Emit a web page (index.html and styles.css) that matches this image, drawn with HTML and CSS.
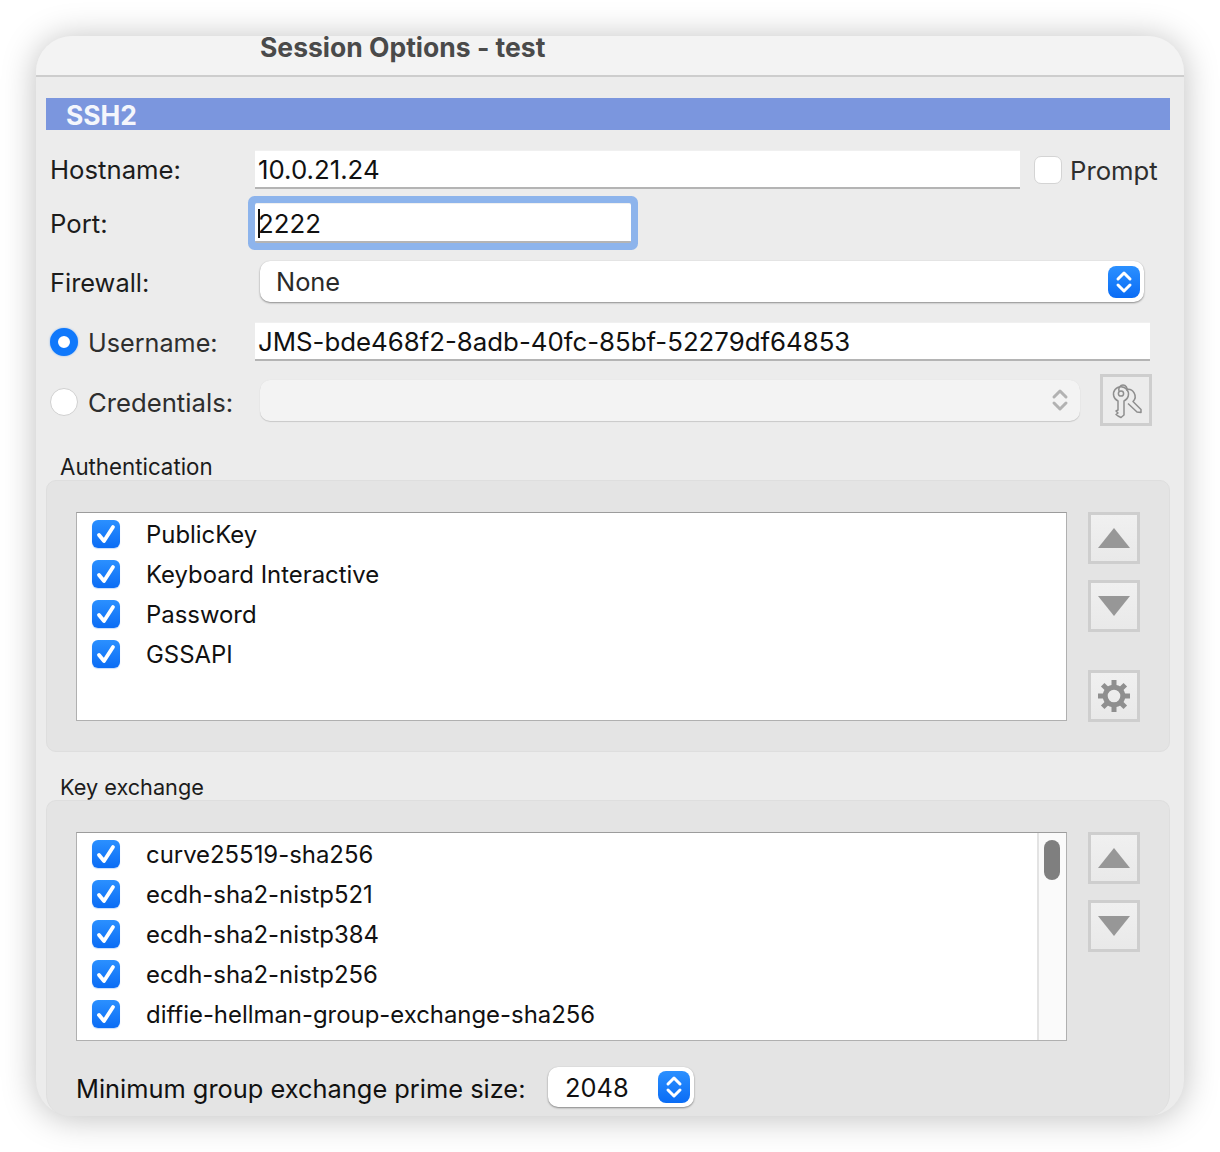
FILE: index.html
```html
<!DOCTYPE html>
<html lang="en">
<head>
  <meta charset="UTF-8">
  <meta name="viewport" content="width=device-width, initial-scale=1.0">
  <title>Session Options - test</title>
  <link rel="stylesheet" href="styles.css">
</head>
<body>
  <svg class="sprites" aria-hidden="true">
    <symbol id="check" viewBox="0 0 28 28">
      <polyline points="7,15 12,21 21,7" fill="none" stroke="#fff" stroke-width="3.8" stroke-linecap="round" stroke-linejoin="round"/>
    </symbol>
    <symbol id="updown" viewBox="0 0 32 32">
      <polyline points="10,13 16,7 22,13" fill="none" stroke="currentColor" stroke-width="3" stroke-linecap="round" stroke-linejoin="round"/>
      <polyline points="10,19 16,25 22,19" fill="none" stroke="currentColor" stroke-width="3" stroke-linecap="round" stroke-linejoin="round"/>
    </symbol>
    <symbol id="tri-up" viewBox="0 0 32 20">
      <polygon points="16,0 32,20 0,20" fill="#979797"/>
    </symbol>
    <symbol id="tri-down" viewBox="0 0 32 20">
      <polygon points="0,0 32,0 16,20" fill="#979797"/>
    </symbol>
    <symbol id="gear" viewBox="0 0 32 32">
      <circle cx="16" cy="16" r="8.8" fill="none" stroke="#8f8f8f" stroke-width="5"/>
      <g stroke="#8f8f8f" stroke-width="5">
        <line x1="16" y1="0" x2="16" y2="7"/>
        <line x1="16" y1="25" x2="16" y2="32"/>
        <line x1="0" y1="16" x2="7" y2="16"/>
        <line x1="25" y1="16" x2="32" y2="16"/>
        <line x1="4.7" y1="4.7" x2="9.6" y2="9.6"/>
        <line x1="22.4" y1="22.4" x2="27.3" y2="27.3"/>
        <line x1="4.7" y1="27.3" x2="9.6" y2="22.4"/>
        <line x1="22.4" y1="9.6" x2="27.3" y2="4.7"/>
      </g>
    </symbol>
  </svg>

  <div class="window">
    <div class="titlebar">Session Options - test</div>

    <div class="content">
      <div class="section-bar">SSH2</div>

      <div class="row row-host">
        <label class="label label-host">Hostname:</label>
        <div class="field field-host">10.0.21.24</div>
        <span class="checkbox-empty"></span>
        <span class="prompt">Prompt</span>
      </div>

      <div class="row row-port">
        <label class="label label-port">Port:</label>
        <div class="field field-port"><span class="caret"></span>2222</div>
      </div>

      <div class="row row-firewall">
        <label class="label label-host label-firewall">Firewall:</label>
        <div class="select select-firewall">
          <span>None</span>
          <span class="select-arrow"><svg><use href="#updown"/></svg></span>
        </div>
      </div>

      <div class="row row-user">
        <span class="radio radio-on"></span>
        <label class="label label-radio label-user">Username:</label>
        <div class="field field-user">JMS-bde468f2-8adb-40fc-85bf-52279df64853</div>
      </div>

      <div class="row row-cred">
        <span class="radio"></span>
        <label class="label label-radio">Credentials:</label>
        <div class="select select-cred">
          <span class="select-arrow-off"><svg><use href="#updown"/></svg></span>
        </div>
        <div class="tool-btn key-btn">
          <svg viewBox="3 3 46 46">
            <g fill="none" stroke="#8e8e8e" stroke-width="1.5" stroke-linejoin="round">
              <path d="M19 17 A4.2 4.6 0 1 1 27 17"/>
              <path d="M26 15.5 A7.2 7.2 0 0 1 33 27.5 L41 35.5 L41 38.5 L37 38 L28 29.5"/>
              <path d="M18 27 L18 36 L16 37 L18 39 L16 40.5 L18 42 L21 43.5 L24 41 L24 27 A7.5 7.5 0 1 0 18 27 Z"/>
              <circle cx="21" cy="19.5" r="2.6"/>
            </g>
          </svg>
        </div>
      </div>

      <div class="group-title">Authentication</div>
      <div class="group">
        <div class="group-main">
          <div class="list">
            <div class="list-items">
              <div class="list-row"><span class="checkbox"><svg><use href="#check"/></svg></span><span>PublicKey</span></div>
              <div class="list-row"><span class="checkbox"><svg><use href="#check"/></svg></span><span>Keyboard Interactive</span></div>
              <div class="list-row"><span class="checkbox"><svg><use href="#check"/></svg></span><span>Password</span></div>
              <div class="list-row"><span class="checkbox"><svg><use href="#check"/></svg></span><span>GSSAPI</span></div>
            </div>
          </div>
          <div class="tool-col">
            <div class="tool-btn"><svg class="tri"><use href="#tri-up"/></svg></div>
            <div class="tool-btn"><svg class="tri"><use href="#tri-down"/></svg></div>
            <div class="tool-btn tool-gear"><svg class="gear"><use href="#gear"/></svg></div>
          </div>
        </div>
      </div>

      <div class="group-title group-title-kex">Key exchange</div>
      <div class="group group-kex">
        <div class="group-main">
          <div class="list">
            <div class="list-items">
              <div class="list-row"><span class="checkbox"><svg><use href="#check"/></svg></span><span>curve25519-sha256</span></div>
              <div class="list-row"><span class="checkbox"><svg><use href="#check"/></svg></span><span>ecdh-sha2-nistp521</span></div>
              <div class="list-row"><span class="checkbox"><svg><use href="#check"/></svg></span><span>ecdh-sha2-nistp384</span></div>
              <div class="list-row"><span class="checkbox"><svg><use href="#check"/></svg></span><span>ecdh-sha2-nistp256</span></div>
              <div class="list-row"><span class="checkbox"><svg><use href="#check"/></svg></span><span>diffie-hellman-group-exchange-sha256</span></div>
              <div class="list-row"><span class="checkbox"><svg><use href="#check"/></svg></span></div>
            </div>
            <div class="scroll-track"><div class="scroll-thumb"></div></div>
          </div>
          <div class="tool-col">
            <div class="tool-btn"><svg class="tri"><use href="#tri-up"/></svg></div>
            <div class="tool-btn"><svg class="tri"><use href="#tri-down"/></svg></div>
          </div>
        </div>
        <div class="prime-row">
          <span class="prime-label">Minimum group exchange prime size:</span>
          <div class="select select-prime">
            <span>2048</span>
            <span class="select-arrow"><svg><use href="#updown"/></svg></span>
          </div>
        </div>
      </div>
    </div>
  </div>
</body>
</html>
```

FILE: styles.css
```css
:root {
  --text: #1c1c1c;
  --label: #2e2e2e;
  --window-bg: #ececec;
  --group-bg: #e4e4e4;
  --blue-top: #2b90ff;
  --blue-bottom: #0a6cf5;
}

* {
  box-sizing: border-box;
}

html, body {
  margin: 0;
  height: 1152px;
  overflow: hidden;
  background: #fff;
}

body {
  padding: 36px;
  font-family: "Inter", "Liberation Sans", sans-serif;
  font-size: 25.7px;
  color: var(--text);
}

.sprites {
  position: absolute;
  width: 0;
  height: 0;
}

.window {
  width: 1148px;
  height: 1080px;
  background: var(--window-bg);
  border-radius: 36px;
  box-shadow: 0 2px 34px rgba(0, 0, 0, 0.26);
}

.titlebar {
  height: 41px;
  padding: 0 0 0 224px;
  background: #f3f3f3;
  border-bottom: 2px solid #cdcdcd;
  border-radius: 36px 36px 0 0;
  font-size: 26.5px;
  font-weight: 700;
  line-height: 22px;
  color: #4a4a4a;
}

.content {
  padding: 21px 14px 0 10px;
}

.section-bar {
  height: 32px;
  padding-left: 20px;
  background: #7b96de;
  color: #f4f6fc;
  font-size: 26.4px;
  font-weight: 700;
  line-height: 34px;
}

.row {
  display: flex;
  align-items: center;
  padding-left: 4px;
}

.label {
  width: 205px;
  flex: none;
  margin-top: 2px;
  color: var(--text);
}

.label-host {
  margin-top: 0;
}

.label-port {
  margin-top: 0;
}

.label-firewall {
  margin-top: 2px;
  font-size: 25.4px;
}

.label-radio {
  width: 167px;
  margin-left: 10px;
  color: var(--label);
}

.label-user {
  font-size: 25.2px;
}

.field {
  height: 39px;
  padding-left: 3px;
  background: #fff;
  border-top: 1px solid #f0f0f0;
  border-bottom: 2px solid #b4b4b4;
  line-height: 37px;
  font-size: 25.8px;
  color: #111;
}

.row-host {
  margin-top: 20px;
}

.field-host {
  width: 765px;
}

.checkbox-empty {
  width: 28px;
  height: 28px;
  margin-left: 14px;
  background: #fff;
  border: 1px solid #d4d4d4;
  border-radius: 7px;
}

.prompt {
  margin: 2px 0 0 8px;
  color: var(--label);
}

.row-port {
  margin-top: 14px;
}

.field-port {
  position: relative;
  width: 376px;
  height: 40px;
  line-height: 39px;
  box-shadow: 0 0 0 7px #8db4ec;
  border-radius: 2px;
}

.caret {
  position: absolute;
  left: 3px;
  top: 5px;
  width: 2px;
  height: 29px;
  background: #111;
}

.row-firewall {
  margin-top: 18px;
}

.select {
  display: flex;
  align-items: center;
  justify-content: space-between;
  background: #fff;
  border-radius: 10px;
  box-shadow: 0 1px 2px rgba(0, 0, 0, 0.4), 0 0 1px rgba(0, 0, 0, 0.12);
  color: #2a2a2a;
}

.select-firewall {
  width: 884px;
  height: 41px;
  margin-left: 5px;
  padding: 0 4px 0 16px;
  font-size: 25.4px;
}

.select-arrow {
  width: 32px;
  height: 32px;
  flex: none;
  border-radius: 8px;
  background: linear-gradient(var(--blue-top), var(--blue-bottom));
  color: #fff;
}

.select-arrow svg {
  display: block;
  width: 32px;
  height: 32px;
}

.row-user {
  margin-top: 20px;
}

.field-user {
  width: 895px;
  height: 39px;
}

.radio {
  width: 28px;
  height: 28px;
  flex: none;
  background: #fff;
  border: 1px solid #d0d0d0;
  border-radius: 50%;
}

.radio-on {
  border: 8.5px solid #0f78fb;
  box-shadow: 0 0 2px rgba(15, 120, 251, 0.5);
}

.row-cred {
  height: 52px;
  margin-top: 13px;
}

.row-cred .radio {
  margin-top: 4px;
}

.row-cred .label {
  margin-top: 5px;
}

.select-cred {
  width: 820px;
  height: 41px;
  margin-left: 5px;
  padding-right: 4px;
  justify-content: flex-end;
  background: #f3f3f3;
  box-shadow: 0 1px 1px rgba(0, 0, 0, 0.14), 0 0 1px rgba(0, 0, 0, 0.08);
}

.select-arrow-off {
  width: 32px;
  height: 32px;
  color: #b2b2b2;
}

.select-arrow-off svg {
  display: block;
  width: 32px;
  height: 32px;
}

.tool-btn {
  display: flex;
  align-items: center;
  justify-content: center;
  width: 52px;
  height: 52px;
  flex: none;
  background: linear-gradient(#f0f0f0, #e9e9e9);
  border: 3px solid #cecece;
}

.key-btn {
  margin-left: 20px;
  background: #ececec;
}

.key-btn svg {
  display: block;
  width: 46px;
  height: 46px;
}

.group-title {
  height: 26px;
  margin-top: 28px;
  padding-left: 14px;
  font-size: 22.3px;
  line-height: 26px;
  color: #1c1c1c;
}

.group-title-kex {
  margin-top: 22px;
  font-size: 21.7px;
}

.group {
  height: 272px;
  padding: 31px 29px 0;
  background: var(--group-bg);
  border: 1px solid #dedede;
  border-radius: 10px;
}

.group-kex {
  height: 316px;
  border-width: 1px 1px 0;
  border-radius: 10px 10px 22px 22px;
}

.group-main {
  display: flex;
  align-items: flex-start;
}

.list {
  display: flex;
  width: 991px;
  height: 209px;
  background: #fff;
  border: 1px solid #b0b0b0;
  border-top-color: #9c9c9c;
  overflow: hidden;
}

.list-items {
  flex: 1;
  padding-top: 1px;
  font-size: 23.9px;
  color: #111;
}

.list-row {
  display: flex;
  align-items: center;
  height: 40px;
  padding-left: 15px;
}

.checkbox {
  width: 28px;
  height: 28px;
  flex: none;
  margin-right: 26px;
  border-radius: 6px;
  background: linear-gradient(var(--blue-top), var(--blue-bottom));
  box-shadow: 0 1px 1px rgba(10, 108, 245, 0.25);
}

.checkbox svg {
  display: block;
  width: 28px;
  height: 28px;
}

.scroll-track {
  width: 29px;
  padding: 7px 5px 0 5px;
  background: #fafafa;
  border-left: 2px solid #e3e3e3;
}

.scroll-thumb {
  width: 16px;
  height: 40px;
  background: #7f7f7f;
  border-radius: 8px;
}

.tool-col {
  display: flex;
  flex-direction: column;
  gap: 16px;
  margin-left: 21px;
}

.tool-gear {
  margin-top: 22px;
}

.tri {
  width: 32px;
  height: 20px;
}

.gear {
  width: 32px;
  height: 32px;
}

.prime-row {
  display: flex;
  align-items: center;
  margin-top: 26px;
}

.prime-label {
  width: 472px;
  margin-top: 2px;
  font-size: 25.4px;
  color: #111;
}

.select-prime {
  width: 146px;
  height: 40px;
  padding: 0 4px 0 17px;
  font-size: 25.4px;
  color: #111;
}
```
